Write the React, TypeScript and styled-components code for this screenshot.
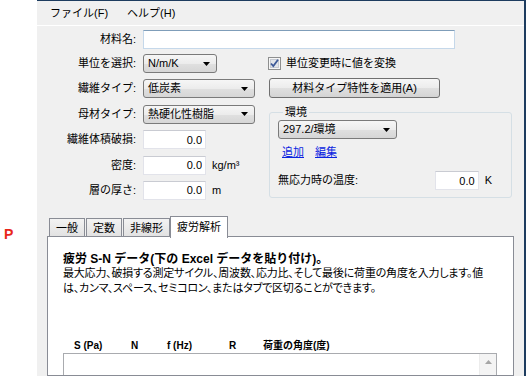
import React from 'react';
import styled, { createGlobalStyle } from 'styled-components';

const GlobalStyle = createGlobalStyle`
  html, body { margin: 0; padding: 0; background: #ffffff; }
  body {
    font-family: "Liberation Sans", "Noto Sans CJK JP", sans-serif;
    font-size: 11px;
    color: #000;
    line-height: 13px;
  }
  #root { width: 526px; height: 376px; overflow: hidden; }
`;

const Page = styled.div`
  display: flex;
  width: 526px;
  height: 376px;
  overflow: hidden;
`;

const Gutter = styled.div`
  width: 37px;
  flex: none;
  box-sizing: border-box;
  padding: 226px 0 0 4px;
  background: #ffffff;
`;

const Marker = styled.span`
  color: #e8261a;
  font: bold 14px "Liberation Sans", sans-serif;
`;

const Window = styled.div`
  flex: 1;
  min-width: 0;
  display: flex;
  flex-direction: column;
  background: #f0f0f0;
  border-top: 1px solid #1d3c5f;
  border-right: 2px solid #1d3c5f;
`;

const MenuBar = styled.div`
  height: 24px;
  flex: none;
  display: flex;
  align-items: center;
  gap: 19px;
  padding-left: 13px;
  border-bottom: 1px solid #ffffff;
`;

const MenuItem = styled.span`
  white-space: nowrap;
`;

const Form = styled.div`
  padding-top: 4px;
  flex: none;
`;

const FieldRow = styled.div`
  display: flex;
  align-items: center;
  height: 19px;
`;

const FieldLabel = styled.span`
  width: 99px;
  margin-right: 7px;
  text-align: right;
  white-space: nowrap;
  flex: none;
`;

const TextBox = styled.input<{ $w: number; $focus?: boolean }>`
  box-sizing: border-box;
  width: ${(p) => p.$w}px;
  height: 19px;
  margin: 0;
  padding: 0 3px;
  font: inherit;
  text-align: ${(p) => (p.$focus ? 'left' : 'right')};
  background: #ffffff;
  border: 1px solid ${(p) => (p.$focus ? '#c5d8ea' : '#e2e3ea')};
  border-top-color: ${(p) => (p.$focus ? '#7f9db9' : '#c9cbd2')};
  outline: none;
  flex: none;
`;

const Unit = styled.span`
  margin-left: 6px;
  white-space: nowrap;
`;

const Combo = styled.div<{ $w: number }>`
  box-sizing: border-box;
  width: ${(p) => p.$w}px;
  height: 19px;
  display: flex;
  align-items: center;
  justify-content: space-between;
  padding: 0 6px 0 4px;
  border: 1px solid #7a7a7a;
  border-radius: 3px;
  background: linear-gradient(#f6f6f6 0%, #ececec 50%, #e0e0e0 51%, #d6d6d6 100%);
  white-space: nowrap;
  flex: none;
`;

const Columns = styled.div`
  display: flex;
  margin-top: 5px;
`;

const LeftCol = styled.div`
  width: 231px;
  flex: none;
  display: flex;
  flex-direction: column;
  gap: 6.4px;
`;

const RightCol = styled.div`
  width: 245px;
  flex: none;
  display: flex;
  flex-direction: column;
`;

const CheckRow = styled.div`
  height: 19px;
  display: flex;
  align-items: center;
  gap: 5px;
`;

const PushButton = styled.div`
  box-sizing: border-box;
  margin: 5px 0 0 1px;
  width: 171px;
  height: 20px;
  display: flex;
  align-items: center;
  justify-content: center;
  border: 1px solid #707070;
  border-radius: 3px;
  background: linear-gradient(#f6f6f6 0%, #ececec 50%, #e0e0e0 51%, #d4d4d4 100%);
  white-space: nowrap;
`;

const Group = styled.fieldset`
  box-sizing: border-box;
  margin: 8px 0 0 1px;
  width: 243px;
  height: 92px;
  padding: 1px 8px 0 8px;
  border: 1px solid #d5dfe5;
  border-radius: 3px;
  display: flex;
  flex-direction: column;
`;

const GroupTitle = styled.legend`
  margin-left: 5px;
  padding: 0 2px;
`;

const LinkRow = styled.div`
  display: flex;
  gap: 11px;
  margin: 7px 0 0 4px;
`;

const Link = styled.a`
  color: #0a24e0;
  text-decoration: underline;
  cursor: pointer;
`;

const TempRow = styled.div`
  display: flex;
  align-items: center;
  height: 19px;
  margin-top: 12px;
`;

const TempLabel = styled.span`
  flex: 1;
`;

const TempSpacer = styled.span`
  width: 11px;
  flex: none;
`;

const TabStrip = styled.div`
  display: flex;
  align-items: flex-end;
  margin: 16px 0 0 12px;
  flex: none;
`;

const Tab = styled.div<{ $active?: boolean }>`
  box-sizing: border-box;
  height: ${(p) => (p.$active ? 22 : 19)}px;
  padding: ${(p) => (p.$active ? '4px 6px 0' : '3px 6px 0')};
  margin: ${(p) => (p.$active ? '0 0 -1px -1px' : '0 1px 0 0')};
  border: 1px solid #898c95;
  border-bottom: ${(p) => (p.$active ? 'none' : '1px solid #898c95')};
  background: ${(p) => (p.$active ? '#ffffff' : 'linear-gradient(#f3f3f3, #e2e2e2)')};
  position: relative;
  z-index: ${(p) => (p.$active ? 1 : 0)};
  white-space: nowrap;
`;

const Panel = styled.div`
  flex: 1;
  margin: -1px 10px 0 10px;
  border: 1px solid #898c95;
  background: #ffffff;
  padding: 15px 16px 0 15px;
  min-height: 0;
  display: flex;
  flex-direction: column;
`;

const PanelTitle = styled.div`
  font-weight: bold;
  font-size: 12px;
  line-height: 14px;
  white-space: nowrap;
`;

const PanelText = styled.div`
  line-height: 15px;
  white-space: nowrap;
  letter-spacing: -0.2px;
  font-feature-settings: "palt";
`;

const HeaderRow = styled.div`
  display: flex;
  margin-top: 44px;
  padding-left: 11px;
  font: bold 10px "Liberation Sans", "Noto Sans CJK JP", sans-serif;
  line-height: 12px;
  height: 13px;
`;

const HeaderCell = styled.span<{ $w?: number }>`
  width: ${(p) => (p.$w ? `${p.$w}px` : 'auto')};
  flex: none;
  white-space: nowrap;
`;

const DataBox = styled.div`
  flex: 1;
  border: 1px solid #a9abaf;
  border-bottom: none;
  display: flex;
  justify-content: flex-end;
`;

const ScrollBar = styled.div`
  width: 16px;
  background: #f4f4f4;
  border-left: 1px solid #ececec;
  display: flex;
  flex-direction: column;
`;

const ScrollButton = styled.div`
  height: 17px;
  display: flex;
  align-items: center;
  justify-content: center;
`;

const DropArrow = () => (
  <svg width="7" height="4" viewBox="0 0 7 4">
    <polygon points="0,0 7,0 3.5,4" fill="#000" />
  </svg>
);

const CheckIcon = () => (
  <svg width="13" height="13" viewBox="0 0 13 13">
    <rect x="0.5" y="0.5" width="12" height="12" fill="#f6f6f6" stroke="#8e8f8f" />
    <rect x="2.5" y="2.5" width="8" height="8" fill="#e2e5ea" stroke="#c6cad2" />
    <path d="M3 6.5 L5.3 9 L10 2.8" fill="none" stroke="#3d5a98" strokeWidth="1.8" />
  </svg>
);

const UpArrow = () => (
  <svg width="7" height="4" viewBox="0 0 7 4">
    <polygon points="0,4 7,4 3.5,0" fill="#a6a6a6" />
  </svg>
);

export default function App() {
  return (
    <Page>
      <GlobalStyle />
      <Gutter>
        <Marker>P</Marker>
      </Gutter>
      <Window>
        <MenuBar>
          <MenuItem>ファイル(F)</MenuItem>
          <MenuItem>ヘルプ(H)</MenuItem>
        </MenuBar>
        <Form>
          <FieldRow>
            <FieldLabel>材料名:</FieldLabel>
            <TextBox $w={312} $focus readOnly defaultValue="" />
          </FieldRow>
          <Columns>
            <LeftCol>
              <FieldRow>
                <FieldLabel>単位を選択:</FieldLabel>
                <Combo $w={74}>
                  <span>N/m/K</span>
                  <DropArrow />
                </Combo>
              </FieldRow>
              <FieldRow>
                <FieldLabel>繊維タイプ:</FieldLabel>
                <Combo $w={112}>
                  <span>低炭素</span>
                  <DropArrow />
                </Combo>
              </FieldRow>
              <FieldRow>
                <FieldLabel>母材タイプ:</FieldLabel>
                <Combo $w={112}>
                  <span>熱硬化性樹脂</span>
                  <DropArrow />
                </Combo>
              </FieldRow>
              <FieldRow>
                <FieldLabel>繊維体積破損:</FieldLabel>
                <TextBox $w={63} readOnly defaultValue="0.0" />
              </FieldRow>
              <FieldRow>
                <FieldLabel>密度:</FieldLabel>
                <TextBox $w={63} readOnly defaultValue="0.0" />
                <Unit>kg/m³</Unit>
              </FieldRow>
              <FieldRow>
                <FieldLabel>層の厚さ:</FieldLabel>
                <TextBox $w={63} readOnly defaultValue="0.0" />
                <Unit>m</Unit>
              </FieldRow>
            </LeftCol>
            <RightCol>
              <CheckRow>
                <CheckIcon />
                <span>単位変更時に値を変換</span>
              </CheckRow>
              <PushButton>材料タイプ特性を適用(A)</PushButton>
              <Group>
                <GroupTitle>環境</GroupTitle>
                <Combo $w={119}>
                  <span>297.2/環境</span>
                  <DropArrow />
                </Combo>
                <LinkRow>
                  <Link>追加</Link>
                  <Link>編集</Link>
                </LinkRow>
                <TempRow>
                  <TempLabel>無応力時の温度:</TempLabel>
                  <TextBox $w={44} readOnly defaultValue="0.0" />
                  <Unit>K</Unit>
                  <TempSpacer />
                </TempRow>
              </Group>
            </RightCol>
          </Columns>
        </Form>
        <TabStrip>
          <Tab>一般</Tab>
          <Tab>定数</Tab>
          <Tab>非線形</Tab>
          <Tab $active>疲労解析</Tab>
        </TabStrip>
        <Panel>
          <PanelTitle>疲労 S-N データ(下の Excel データを貼り付け)。</PanelTitle>
          <PanelText>
            最大応力、破損する測定サイクル、周波数、応力比、そして最後に荷重の角度を入力します。値
            <br />
            は、カンマ、スペース、セミコロン、またはタブで区切ることができます。
          </PanelText>
          <HeaderRow>
            <HeaderCell $w={57}>S (Pa)</HeaderCell>
            <HeaderCell $w={36}>N</HeaderCell>
            <HeaderCell $w={62}>f (Hz)</HeaderCell>
            <HeaderCell $w={34}>R</HeaderCell>
            <HeaderCell>荷重の角度(度)</HeaderCell>
          </HeaderRow>
          <DataBox>
            <ScrollBar>
              <ScrollButton>
                <UpArrow />
              </ScrollButton>
            </ScrollBar>
          </DataBox>
        </Panel>
      </Window>
    </Page>
  );
}
